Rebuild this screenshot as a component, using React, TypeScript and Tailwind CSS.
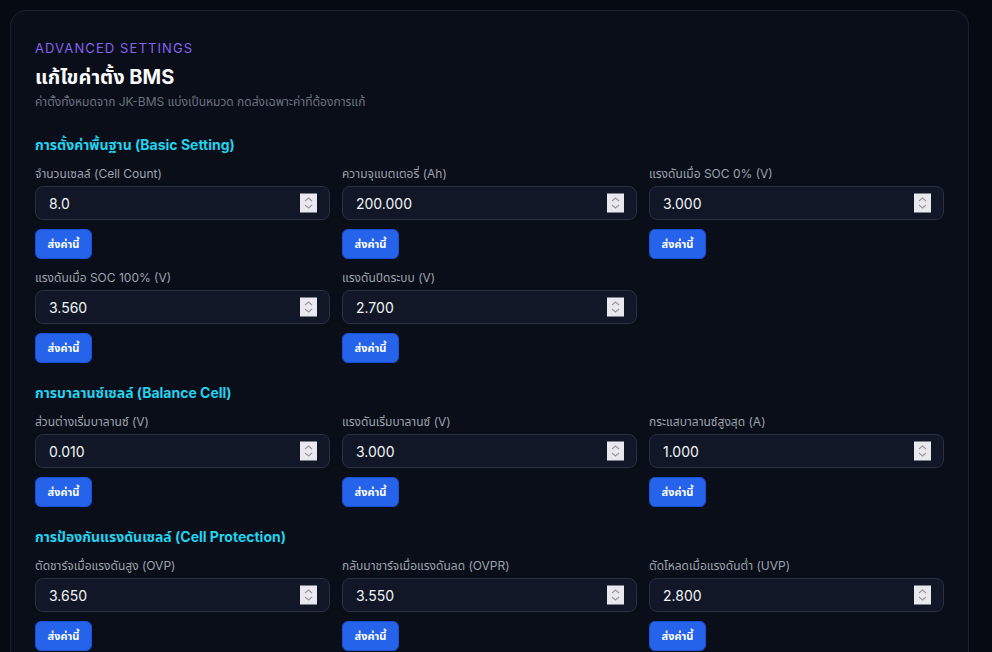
import React from "react";

type Field = { label: string; value: string };
type Section = { title: string; fields: Field[] };

const sections: Section[] = [
  {
    title: "การตั้งค่าพื้นฐาน (Basic Setting)",
    fields: [
      { label: "จำนวนเซลล์ (Cell Count)", value: "8.0" },
      { label: "ความจุแบตเตอรี่ (Ah)", value: "200.000" },
      { label: "แรงดันเมื่อ SOC 0% (V)", value: "3.000" },
      { label: "แรงดันเมื่อ SOC 100% (V)", value: "3.560" },
      { label: "แรงดันปิดระบบ (V)", value: "2.700" },
    ],
  },
  {
    title: "การบาลานซ์เซลล์ (Balance Cell)",
    fields: [
      { label: "ส่วนต่างเริ่มบาลานซ์ (V)", value: "0.010" },
      { label: "แรงดันเริ่มบาลานซ์ (V)", value: "3.000" },
      { label: "กระแสบาลานซ์สูงสุด (A)", value: "1.000" },
    ],
  },
  {
    title: "การป้องกันแรงดันเซลล์ (Cell Protection)",
    fields: [
      { label: "ตัดชาร์จเมื่อแรงดันสูง (OVP)", value: "3.650" },
      { label: "กลับมาชาร์จเมื่อแรงดันลด (OVPR)", value: "3.550" },
      { label: "ตัดโหลดเมื่อแรงดันต่ำ (UVP)", value: "2.800" },
    ],
  },
];

function Spinner() {
  return (
    <span className="absolute right-[13px] top-1/2 -translate-y-1/2 flex h-[19px] w-[17px] items-center justify-center bg-[#e9e8ee]">
      <svg width="9" height="13" viewBox="0 0 9 13" fill="none" stroke="#9a99a3" strokeWidth="1.2">
        <path d="M1 4.5 L4.5 1.5 L8 4.5" />
        <path d="M1 8.5 L4.5 11.5 L8 8.5" />
      </svg>
    </span>
  );
}

function SettingField({ field }: { field: Field }) {
  return (
    <div className="flex flex-col">
      <label className="text-xs leading-4 text-[#9ca3af]">{field.label}</label>
      <div className="relative mt-1">
        <input
          type="text"
          readOnly
          value={field.value}
          className="h-[34px] w-full rounded-lg border border-[#273142] bg-[#111726] px-[13px] text-sm text-[#f3f4f6] outline-none"
        />
        <Spinner />
      </div>
      <div className="mt-[9px]">
        <button className="h-[30px] w-[57px] rounded-md border border-[#1d4ed8] bg-[#2563eb] text-[11px] font-bold text-white">
          ส่งค่านี้
        </button>
      </div>
    </div>
  );
}

export default function App() {
  return (
    <div
      className="min-h-screen bg-[#060a12] pl-[10px] pt-[10px]"
      style={{ fontFamily: 'Inter, "Noto Sans", "Noto Sans Thai", sans-serif' }}
    >
      <div className="w-[959px] rounded-t-2xl border border-b-0 border-[#1a2232] bg-[#0a0e18] px-6 pb-6 pt-[29px]">
        <div className="text-[13px] leading-4 tracking-[0.085em] text-[#8662f0]">ADVANCED SETTINGS</div>
        <h1 className="mt-[7px] text-xl font-bold leading-7 text-[#f9fafb]">แก้ไขค่าตั้ง BMS</h1>
        <p className="mt-[3px] text-xs leading-4 text-[#6b7280]">
          ค่าตั้งทั้งหมดจาก JK-BMS แบ่งเป็นหมวด กดส่งเฉพาะค่าที่ต้องการแก้
        </p>

        {sections.map((s, i) => (
          <section key={i} className={i === 0 ? "mt-[25px]" : "mt-5"}>
            <h2 className="text-sm font-bold leading-5 text-[#22d3ee]">{s.title}</h2>
            <div className="mt-[11px] grid grid-cols-3 gap-x-3 gap-y-[11px]">
              {s.fields.map((f, j) => (
                <SettingField key={j} field={f} />
              ))}
            </div>
          </section>
        ))}
      </div>
    </div>
  );
}
